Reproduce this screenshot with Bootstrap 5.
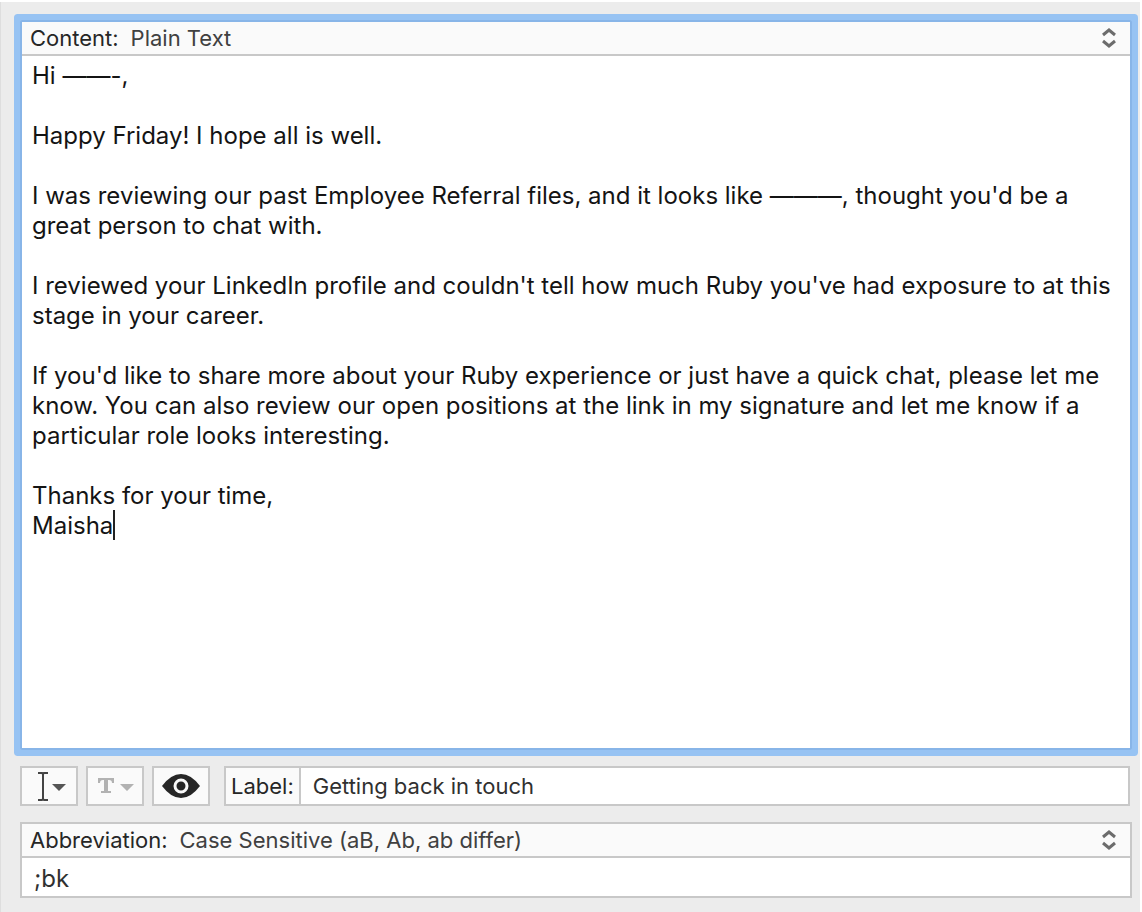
<!DOCTYPE html>
<html lang="en">
<head>
<meta charset="utf-8">
<meta name="viewport" content="width=device-width, initial-scale=1">
<title>Snippet editor</title>
<link href="https://cdn.jsdelivr.net/npm/bootstrap@5.3.0/dist/css/bootstrap.min.css" rel="stylesheet">
<style>
  :root { --edge: #c8c8c8; --head: #fafafa; }
  body { background: #fff; font-family: Inter, "Liberation Sans", sans-serif; font-size: 22px; line-height: 30px; color: #262626; }
  .editor { background: #ececec; border-left: 1px solid #dedede; margin: 2px 2px 0 0; padding: 20px 10px 14px 21px; min-height: calc(100vh - 2px); }
  .content-panel { background: #fff; box-shadow: 0 0 0 2px #88b5e8, 0 0 0 8px #97c3f3; border-radius: 1px; }
  .panel-head { background: var(--head); height: 34px; padding: 0 8px; gap: 12px; border-bottom: 2px solid var(--edge); }
  .panel-head select { appearance: none; border: 0; background: transparent; padding: 0; color: #404040; outline: 0; }
  .panel-head svg { right: 13px; top: 5px; pointer-events: none; }
  .message { display: block; height: 692px; padding: 5px 10px 0 10px; border: 0; resize: none; outline: 0; font-size: 24px; color: #141414; }
  .caret { left: 91px; top: 454px; width: 2px; height: 30px; background: #222; }
  .tool { width: 58px; height: 40px; padding: 0; border: 2px solid var(--edge); background: var(--head); }
  .tool svg { display: block; }
  .boxed { border: 2px solid var(--edge); background: #fff; }
  .boxed input { border: 0; outline: 0; background: #fff; padding: 0 12px; color: #303030; }
  .tag { background: var(--head); border-right: 2px solid var(--edge); padding: 3px 5px; }
  .label-row { margin: 18px 0 0 -2px; }
  .label-box { margin-left: 14px; }
  .abbr-panel { margin: 16px -2px 0 -2px; }
  .abbr-panel input { height: 38px; padding-top: 3px; font-size: 24px; }
</style>
</head>
<body>
<main class="editor">
  <section class="content-panel">
    <div class="panel-head d-flex align-items-center position-relative">
      <label for="kind">Content:</label>
      <select id="kind" class="flex-grow-1"><option>Plain Text</option></select>
      <svg class="position-absolute" width="16" height="22" viewBox="0 0 16 22" fill="none" stroke="#6c6c6c" stroke-width="3"><path d="M2 8L8 3L14 8M2 14L8 19L14 14"/></svg>
    </div>
    <div class="position-relative">
      <textarea class="message w-100" aria-label="Message" spellcheck="false">Hi ——-,

Happy Friday! I hope all is well.

I was reviewing our past Employee Referral files, and it looks like ———, thought you'd be a great person to chat with.

I reviewed your LinkedIn profile and couldn't tell how much Ruby you've had exposure to at this stage in your career.

If you'd like to share more about your Ruby experience or just have a quick chat, please let me know. You can also review our open positions at the link in my signature and let me know if a particular role looks interesting.

Thanks for your time,
Maisha</textarea>
      <span class="caret position-absolute"></span>
    </div>
  </section>

  <div class="label-row d-flex">
    <button class="tool me-2" type="button" aria-label="Insert"><svg width="54" height="36" viewBox="0 0 54 36"><path d="M16 5h4l1 1l1-1h4M21 6v25M16 32h4l1-1l1 1h4" fill="none" stroke="#444" stroke-width="2"/><path d="M30 16h14l-7 7z" fill="#555"/></svg></button>
    <button class="tool me-2" type="button" aria-label="Text style"><svg width="54" height="36" viewBox="0 0 54 36" fill="#b2b2b2"><path d="M10 10h16v5h-2q0-3-3-3h-1v11h3v2H13v-2h3V12h-1q-3 0-3 3h-2zM32 16h14l-7 7z"/></svg></button>
    <button class="tool" type="button" aria-label="Preview"><svg width="54" height="36" viewBox="0 0 54 36"><path d="M8 18Q17 6 27 6T46 18Q37 30 27 30T8 18z" fill="#262626"/><circle cx="27" cy="18" r="6" fill="none" stroke="#fafafa" stroke-width="3"/></svg></button>
    <div class="boxed label-box d-flex flex-grow-1">
      <label for="name" class="tag">Label:</label>
      <input id="name" class="flex-grow-1" type="text" value="Getting back in touch">
    </div>
  </div>

  <section class="abbr-panel boxed">
    <div class="panel-head d-flex align-items-center position-relative">
      <label for="match">Abbreviation:</label>
      <select id="match" class="flex-grow-1"><option>Case Sensitive (aB, Ab, ab differ)</option></select>
      <svg class="position-absolute" width="16" height="22" viewBox="0 0 16 22" fill="none" stroke="#6c6c6c" stroke-width="3"><path d="M2 8L8 3L14 8M2 14L8 19L14 14"/></svg>
    </div>
    <input class="w-100 d-block" type="text" value=";bk" aria-label="Abbreviation text">
  </section>
</main>
<script src="https://cdn.jsdelivr.net/npm/bootstrap@5.3.0/dist/js/bootstrap.bundle.min.js"></script>
</body>
</html>
